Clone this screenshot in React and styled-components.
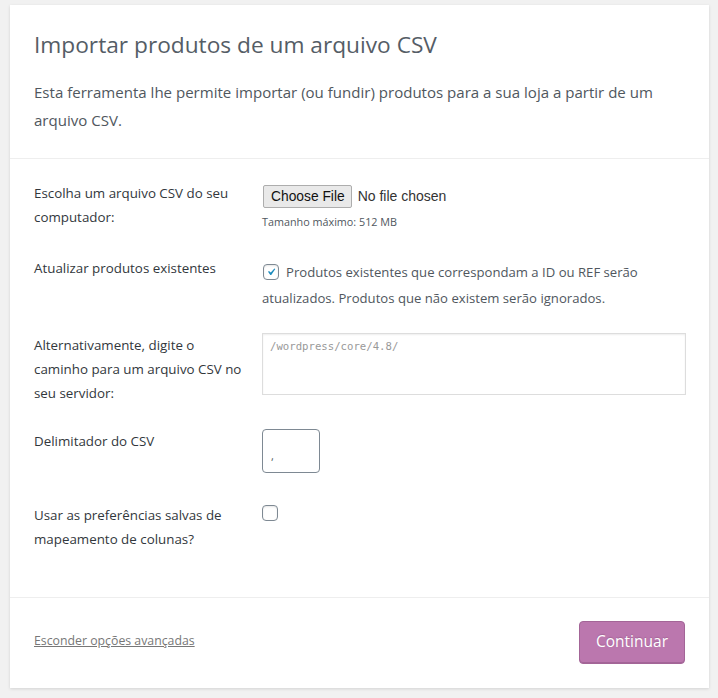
import React from 'react'
import styled, {createGlobalStyle} from 'styled-components'

const GlobalStyle = createGlobalStyle`
  body {
    margin: 0;
    background: #f1f1f1;
    font-family: "Open Sans", "Noto Sans", sans-serif;
    color: #32373c;
  }
`
const Page = styled.div`
  padding: 5px 9px 10px 10px;
`
const Card = styled.div`
  background: #fff;
  box-shadow: 0 1px 3px rgba(0, 0, 0, 0.13);
`
const Header = styled.header`
  padding: 24px 24px 24px;
  border-bottom: 1px solid #eee;
`
const Title = styled.h2`
  margin: 0 0 17px;
  font-size: 22.7px;
  font-weight: 400;
  line-height: 1.4;
  color: #555d66;
`
const Intro = styled.p`
  margin: 0;
  font-size: 15.05px;
  line-height: 28px;
  color: #50575e;
`
const Body = styled.section`
  padding: 22px 24px 46px;
  border-bottom: 1px solid #eee;
`
const Form = styled.div`
  display: grid;
  grid-template-columns: 228px 1fr;
  row-gap: 24px;
  align-items: start;
`
const Label = styled.label`
  font-size: 13.35px;
  line-height: 24px;
  color: #32373c;
  padding-right: 12px;
`
const Field = styled.div`
  font-size: 13px;
  color: #32373c;
  padding-bottom: ${p => p.$pb || 0}px;
`
const FileRow = styled.div`
  display: flex;
  align-items: center;
  gap: 6px;
  margin-top: 4px;
  font-family: "Liberation Sans", Arial, sans-serif;
  font-size: 14px;
  color: #333;
`
const FileButton = styled.button`
  font-family: "Liberation Sans", Arial, sans-serif;
  font-size: 13.8px;
  color: #111;
  background: #e9e9e9;
  border: 1px solid #adadad;
  border-radius: 2px;
  height: 23px;
  padding: 0 6px 0 7px;
  margin-left: 1px;
`
const Hint = styled.p`
  margin: 4px 0 0;
  font-size: 10.8px;
  line-height: 20px;
  color: #50575e;
`
const CheckText = styled.p`
  margin: 3px 0 -2px;
  font-size: 13.14px;
  line-height: 26px;
  color: #50575e;
`
const Box = styled.span`
  display: inline-flex;
  vertical-align: -3px;
  align-items: center;
  justify-content: center;
  width: 14px;
  height: 14px;
  margin: ${p => p.$mt || 0}px 7px 0 ${p => p.$ml ?? 1}px;
  border: 1px solid #7e8993;
  border-radius: 4px;
  background: #fff;
  box-shadow: inset 0 1px 2px rgba(0, 0, 0, 0.1);
`
const PathInput = styled.textarea`
  display: block;
  box-sizing: border-box;
  width: 424px;
  height: 62px;
  padding: 4px 7px;
  resize: none;
  border: 1px solid #ddd;
  box-shadow: inset 0 1px 2px rgba(0, 0, 0, 0.07);
  font-family: "DejaVu Sans Mono", "Liberation Mono", monospace;
  font-size: 10.66px;
  line-height: 18px;
  color: #32373c;
  outline: none;

  &::placeholder {
    color: #999;
  }
`
const SmallInput = styled.input`
  display: block;
  box-sizing: border-box;
  width: 58px;
  height: 44px;
  padding: 10px 8px 0;
  border: 1px solid #7e8993;
  border-radius: 4px;
  font-family: "Open Sans", sans-serif;
  font-size: 11px;
  color: #50575e;
  outline: none;
`
const Footer = styled.footer`
  display: flex;
  align-items: center;
  justify-content: space-between;
  padding: 23px 24px 24px;
`
const Toggle = styled.a`
  font-size: 12.3px;
  color: #777;
  text-decoration: underline;
  margin-top: -3px;
`
const Continue = styled.button`
  width: 106px;
  height: 43px;
  font-family: "Open Sans", sans-serif;
  font-size: 15.5px;
  color: #fff;
  background: #bb77ae;
  border: 1px solid #a36597;
  border-radius: 4px;
  box-shadow: inset 0 -1px 0 #a36597;
  text-shadow: 0 -1px 1px #a36597;
  padding: 0 0 2px;
`

const Check = ({checked, $mt, $ml}) => (
  <Box $mt={$mt} $ml={$ml}>
    {checked && (
      <svg width="16" height="16" viewBox="0 0 20 20">
        <path d="M14.83 4.89l1.34.94-5.81 8.38H9.02L5.78 9.67l1.34-1.25 2.57 2.4z" fill="#1e8cbe"/>
      </svg>
    )}
  </Box>
)

export default function App() {
  return (
    <Page>
      <GlobalStyle/>
      <Card>
        <Header>
          <Title>Importar produtos de um arquivo CSV</Title>
          <Intro>Esta ferramenta lhe permite importar (ou fundir) produtos para a sua loja a partir de um arquivo CSV.</Intro>
        </Header>
        <Body>
          <Form>
            <Label>Escolha um arquivo CSV do seu computador:</Label>
            <Field>
              <FileRow>
                <FileButton>Choose File</FileButton>
                <span>No file chosen</span>
              </FileRow>
              <Hint>Tamanho máximo: 512 MB</Hint>
            </Field>

            <Label>Atualizar produtos existentes</Label>
            <Field>
              <CheckText>
                <Check checked/>
                Produtos existentes que correspondam a ID ou REF serão atualizados. Produtos que não existem serão ignorados.
              </CheckText>
            </Field>

            <Label>Alternativamente, digite o caminho para um arquivo CSV no seu servidor:</Label>
            <Field>
              <PathInput placeholder="/wordpress/core/4.8/"/>
            </Field>

            <Label>Delimitador do CSV</Label>
            <Field $pb={6}>
              <SmallInput defaultValue=","/>
            </Field>

            <Label>Usar as preferências salvas de mapeamento de colunas?</Label>
            <Field>
              <Check $mt={2} $ml={0}/>
            </Field>
          </Form>
        </Body>
        <Footer>
          <Toggle href="#">Esconder opções avançadas</Toggle>
          <Continue>Continuar</Continue>
        </Footer>
      </Card>
    </Page>
  )
}
